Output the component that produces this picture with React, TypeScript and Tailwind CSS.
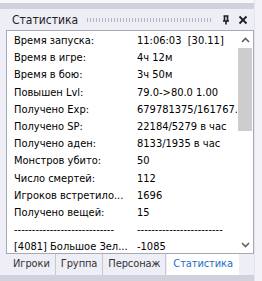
import React from 'react';

const rows: [string, string][] = [
  ['Время запуска:', '11:06:03  [30.11]'],
  ['Время в игре:', '4ч 12м'],
  ['Время в бою:', '3ч 50м'],
  ['Повышен Lvl:', '79.0->80.0 1.00'],
  ['Получено Exp:', '679781375/161767.0 в час'],
  ['Получено SP:', '22184/5279 в час'],
  ['Получено аден:', '8133/1935 в час'],
  ['Монстров убито:', '50'],
  ['Число смертей:', '112'],
  ['Игроков встретило...', '1696'],
  ['Получено вещей:', '15'],
  ['----------------------------', '------------------------'],
  ['[4081] Большое Зел...', '-1085'],
];

const tabs = ['Игроки', 'Группа', 'Персонаж', 'Статистика'];

const Chevron: React.FC<{ up?: boolean }> = ({ up }) => (
  <svg width="9" height="6" viewBox="0 0 9 6" className="text-[#606060]">
    <path d={up ? 'M1 5 L4.5 1.5 L8 5' : 'M1 1 L4.5 4.5 L8 1'} fill="none" stroke="currentColor" strokeWidth="1.6" />
  </svg>
);

export default function App() {
  return (
    <div className="w-[262px] h-[281px] flex bg-[#eeeef7] overflow-hidden text-[#000] font-['Tahoma','DejaVu_Sans_Condensed','DejaVu_Sans',sans-serif] text-[11px]">
      <div className="w-[254px] flex flex-col">
        <div className="h-[3px] bg-[#f7f7fa]" />
        <div className="h-[6px] bg-[#cfd1dc]" />
        {/* header */}
        <div className="h-[21px] flex items-center pl-[12px] pr-[6px]">
          <span className="text-[12px] text-[#1e1e1e]">Статистика</span>
          <div className="flex-1 ml-[8px] mr-[10px] h-[4px] bg-[radial-gradient(circle,#b4b4c4_0.7px,transparent_0.8px)] bg-[length:3px_2px]" />
          <svg width="8" height="10" viewBox="0 0 8 10" className="mr-[8px]">
            <path d="M1.5 1 H6.5 M2.5 1 V6 M5.5 1 V6 M1 6 H7 M4 6 V9.5" stroke="#1e1e1e" strokeWidth="1.6" fill="none" />
          </svg>
          <svg width="10" height="10" viewBox="0 0 10 10">
            <path d="M1.5 1.5 L8.5 8.5 M8.5 1.5 L1.5 8.5" stroke="#1e1e1e" strokeWidth="1.8" />
          </svg>
        </div>
        {/* content box */}
        <div className="relative z-10 ml-[6px] h-[224px] bg-white border border-[#a9a9b3] flex">
          <div className="flex-1 min-w-0 pt-[1px] pl-[7px]">
            {rows.map(([l, v], i) => (
              <div key={i} className="h-[17.2px] leading-[17.2px] flex whitespace-pre">
                <div className="w-[123px] shrink-0 overflow-x-clip">{l}</div>
                <div className="flex-1 min-w-0 overflow-x-clip">{v}</div>
              </div>
            ))}
          </div>
          <div className="w-[16px] shrink-0 flex flex-col items-center">
            <div className="h-[17px] flex items-center justify-center"><Chevron up /></div>
            <div className="w-[14px] h-[83px] bg-[#cdcdcd]" />
            <div className="flex-1" />
            <div className="h-[17px] flex items-center justify-center"><Chevron /></div>
          </div>
        </div>
        {/* tabs */}
        <div className="h-[21px] flex pl-[8px] tracking-[-0.1px]">
          {tabs.map((t, i) => (
            <div
              key={t}
              className={`px-[5px] flex items-center ${i === 3 ? 'bg-white text-[#1a6fc9] ml-[1px] px-[6px]' : 'text-[#333]'} ${i > 0 && i < 3 ? 'border-l border-[#c8c8d0]' : ''} ${i === 2 ? 'border-r' : ''}`}
            >
              {t}
            </div>
          ))}
        </div>
        <div className="flex-1 bg-[#cfd1dc]" />
      </div>
      <div className="flex-1 border-l border-[#e4e4ee] bg-[#f2f2f8]" />
    </div>
  );
}
